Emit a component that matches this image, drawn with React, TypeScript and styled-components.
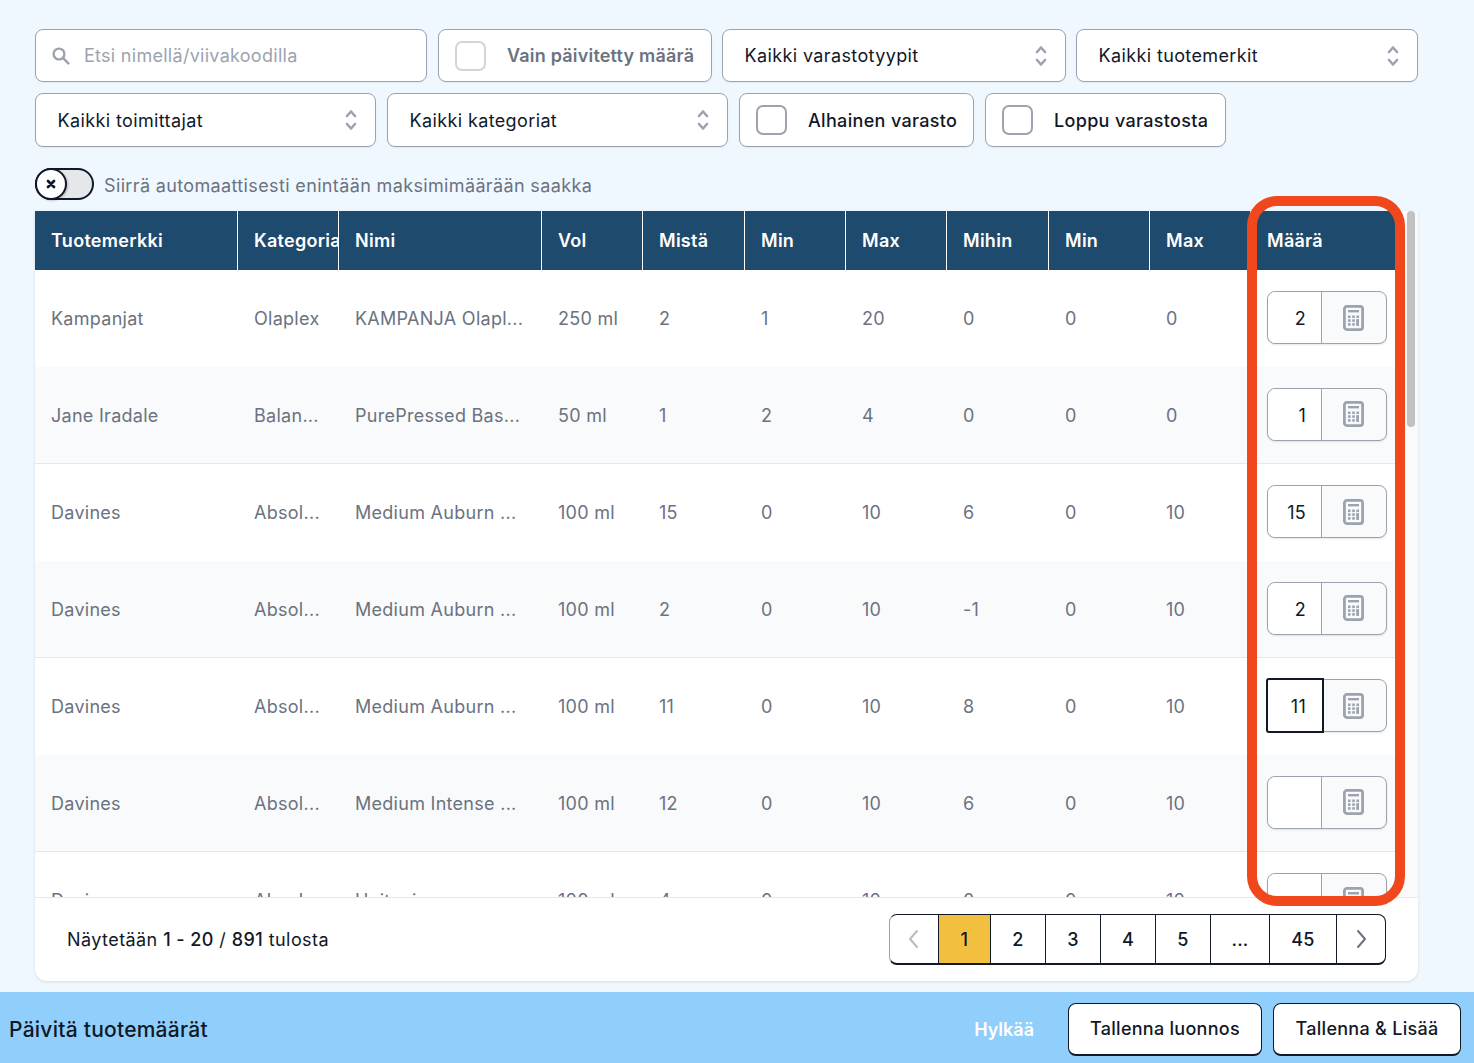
import React from "react";
import styled, { createGlobalStyle } from "styled-components";

const Global = createGlobalStyle`
  html, body { margin: 0; padding: 0; height: 1063px; overflow: hidden; background: #f0f8ff; }
  body, input, button { font-family: Inter, "Noto Sans", sans-serif; font-size: 18px; letter-spacing: 0.28px; color: #111827; }
  * { box-sizing: border-box; }
`;

const Page = styled.div`
  position: relative;
  width: 1474px;
  height: 1063px;
  display: flex;
  flex-direction: column;
`;
const Main = styled.main`
  flex: 1;
  min-height: 0;
  padding: 29px 56px 11px 35px;
  display: flex;
  flex-direction: column;
`;
const FilterRow = styled.div<{ $top?: number; $gap: number }>`
  display: flex;
  gap: ${p => p.$gap}px;
  height: ${p => (p.$top ? 54 : 53)}px;
  margin-top: ${p => p.$top ?? 0}px;
`;
const Control = styled.div<{ $w: number }>`
  width: ${p => p.$w}px;
  height: 100%;
  flex: none;
  display: flex;
  align-items: center;
  background: #fff;
  border: 1px solid #9ca3af;
  border-radius: 8px;
  box-shadow: 0 1px 2px rgba(0, 0, 0, 0.06);
`;
const Search = styled(Control)`
  padding-left: 16px;
  gap: 14px;
  margin-right: 1px;
  color: #9ca3af;
`;
const SelectBox = styled(Control)`
  padding: 0 18px 0 21.5px;
  justify-content: space-between;
  letter-spacing: 0.38px;
`;
const CheckBox = styled(Control)<{ $muted?: boolean }>`
  padding-left: 16px;
  gap: 21px;
  font-weight: ${p => (p.$muted ? 600 : 500)};
  color: ${p => (p.$muted ? "#6b7280" : "#111827")};
  letter-spacing: ${p => (p.$muted ? 0.2 : 0.33)}px;
  white-space: nowrap;
`;
const Tick = styled.span<{ $muted?: boolean }>`
  width: 31px;
  height: 30px;
  flex: none;
  border: 2px solid ${p => (p.$muted ? "#d1d5db" : "#9ca3af")};
  border-radius: 7px;
  background: #fff;
`;
const ToggleRow = styled.div`
  display: flex;
  align-items: center;
  gap: 10px;
  height: 32px;
  margin: 21px 0 11px;
  color: #6b7280;
`;
const ToggleLabel = styled.span`
  margin-top: 2px;
  letter-spacing: 0.36px;
`;
const Toggle = styled.span`
  position: relative;
  width: 59px;
  height: 32px;
  border: 2px solid #111827;
  border-radius: 16px;
  background: #e5e7eb;
`;
const Knob = styled.span`
  position: absolute;
  left: -2px;
  top: -2px;
  width: 32px;
  height: 32px;
  border: 2.5px solid #111827;
  border-radius: 50%;
  background: #fff;
  box-shadow: 1px 1px 2px rgba(0, 0, 0, 0.2);
  display: flex;
  align-items: center;
  justify-content: center;
`;
const Card = styled.section`
  flex: 1;
  min-height: 0;
  background: #fff;
  border-radius: 0 0 12px 12px;
  box-shadow: 0 1px 3px rgba(0, 0, 0, 0.12);
  display: flex;
  flex-direction: column;
  overflow: hidden;
`;
const ScrollArea = styled.div`
  height: 687px;
  flex: none;
  display: flex;
  overflow: hidden;
  border-bottom: 1px solid #e5e7eb;
`;
const TableClip = styled.div`
  width: 1360px;
  flex: none;
  overflow: hidden;
`;
const Track = styled.div`
  width: 23px;
  flex: none;
  background: #fafafa;
  padding-left: 12px;
`;
const Thumb = styled.div`
  width: 8px;
  height: 216px;
  background: #c1c1c1;
  border-radius: 4px;
`;
const Table = styled.table`
  width: 1360px;
  table-layout: fixed;
  border-collapse: separate;
  border-spacing: 0;
`;
const Th = styled.th`
  height: 59px;
  padding: 0 0 0 16px;
  background: #1e4a6d;
  color: #fff;
  font-weight: 600;
  text-align: left;
  white-space: nowrap;
  overflow: hidden;
  border-right: 1px solid #fff;
  &:last-child { border-right: 0; }
`;
const Tr = styled.tr<{ $even: boolean }>`
  background: ${p => (p.$even ? "#f9fafb" : "#fff")};
`;
const Td = styled.td<{ $even: boolean }>`
  height: 97px;
  padding: 0 0 0 16px;
  color: #6b7280;
  white-space: nowrap;
  overflow: hidden;
  border-bottom: ${p => (p.$even ? "1px solid #e5e7eb" : "0")};
`;
const Qty = styled.div`
  width: 120px;
  height: 53px;
  margin-top: -2px;
  display: flex;
  border: 1px solid #9ca3af;
  border-radius: 8px;
  box-shadow: 0 1px 2px rgba(0, 0, 0, 0.1);
  background: #f9fafb;
  position: relative;
`;
const QtyValue = styled.div<{ $focus?: boolean }>`
  width: 54px;
  flex: none;
  background: #fff;
  border-right: 1px solid #9ca3af;
  border-radius: 8px 0 0 8px;
  color: #111827;
  display: flex;
  align-items: center;
  justify-content: flex-end;
  padding: 2px 15px 0 0;
  ${p =>
    p.$focus &&
    `outline: 2px solid #111827; outline-offset: -1px; border-radius: 2px 0 0 2px; border-right: 0; width: 56px; margin: -1px 0 -1px -1px; padding-right: 17px;`}
`;
const QtyIcon = styled.div`
  flex: 1;
  display: flex;
  align-items: center;
  justify-content: center;
  padding-right: 2px;
`;
const Foot = styled.div`
  flex: 1;
  display: flex;
  align-items: flex-start;
  justify-content: space-between;
  padding: 16px 32px 0;
`;
const Summary = styled.div`
  height: 52px;
  line-height: 52px;
  letter-spacing: 0.43px;
  b { font-weight: 500; }
`;
const Pager = styled.nav`
  display: flex;
  height: 51px;
  border: 1px solid #111827;
  border-left-color: #9ca3af;
  border-radius: 8px;
  border-bottom-width: 2px;
  overflow: hidden;
  background: #fff;
`;
const PageCell = styled.span<{ $w: number; $active?: boolean }>`
  width: ${p => p.$w}px;
  flex: none;
  display: flex;
  align-items: center;
  justify-content: center;
  font-weight: 500;
  background: ${p => (p.$active ? "#f3bf3f" : "transparent")};
  border-left: 1px solid #111827;
  &:first-child { border-left: 0; }
`;
const BottomBar = styled.footer`
  height: 71px;
  flex: none;
  background: #90cffb;
  display: flex;
  align-items: center;
  padding: 3px 13px 0 9px;
`;
const Title = styled.h1`
  flex: 1;
  margin: 0;
  font-size: 21px;
  letter-spacing: 0.25px;
  font-weight: 500;
`;
const Dismiss = styled.span`
  color: #fff;
  font-weight: 600;
  margin-right: 34px;
  letter-spacing: 0;
`;
const Action = styled.button<{ $w: number; $gap?: boolean }>`
  width: ${p => p.$w}px;
  height: 53px;
  margin-left: ${p => (p.$gap ? 11 : 0)}px;
  background: #fff;
  border: 1px solid #111827;
  border-bottom-width: 2px;
  border-radius: 8px;
  font-weight: 500;
  padding: 0;
`;
const Highlight = styled.div`
  position: absolute;
  left: 1247px;
  top: 196px;
  width: 158px;
  height: 710px;
  border: 10px solid #f0481c;
  border-radius: 30px;
  pointer-events: none;
`;

const SearchIcon = () => (
  <svg width="18" height="18" viewBox="0 0 18 18" fill="none" stroke="#9ca3af" strokeWidth="2.4" strokeLinecap="round">
    <circle cx="7" cy="7" r="5.4" />
    <path d="M11.2 11.2 16.4 16.4" />
  </svg>
);
const Chevrons = () => (
  <svg width="12" height="22" viewBox="0 0 12 22" fill="none" stroke="#9ca3af" strokeWidth="2.6" strokeLinecap="round" strokeLinejoin="round">
    <path d="M2 7 6 2.5 10 7M2 15l4 4.5 4-4.5" />
  </svg>
);
const Calc = () => (
  <svg width="21" height="26" viewBox="0 0 21 26" fill="none">
    <rect x="1.4" y="1.4" width="18.2" height="23.2" rx="2.5" fill="#f9fafb" stroke="#9ca3af" strokeWidth="2.8" />
    <path d="M5 5h11v2.4H5z" fill="#9ca3af" />
    {[10.5, 14.3, 18.1].flatMap(y =>
      [5, 9.2, 13.4].map(x => <rect key={`${x}-${y}`} x={x} y={y} width="2.6" height="2.6" fill="#9ca3af" />)
    )}
    <rect x="13.4" y="14.3" width="2.6" height="6.4" fill="#9ca3af" />
  </svg>
);
const ChevronSide = ({ d, color }: { d: string; color: string }) => (
  <svg width="14" height="20" viewBox="0 0 14 20" fill="none" stroke={color} strokeWidth="2" strokeLinecap="round" strokeLinejoin="round">
    <path d={d} />
  </svg>
);

const widths = [203, 101, 203, 101, 102, 101, 101, 102, 101, 101, 144];
const heads = ["Tuotemerkki", "Kategoria", "Nimi", "Vol", "Mistä", "Min", "Max", "Mihin", "Min", "Max", "Määrä"];
const rows: { c: string[]; q: string; focus?: boolean }[] = [
  { c: ["Kampanjat", "Olaplex", "KAMPANJA Olapl...", "250 ml", "2", "1", "20", "0", "0", "0"], q: "2" },
  { c: ["Jane Iradale", "Balan...", "PurePressed Bas...", "50 ml", "1", "2", "4", "0", "0", "0"], q: "1" },
  { c: ["Davines", "Absol...", "Medium Auburn ...", "100 ml", "15", "0", "10", "6", "0", "10"], q: "15" },
  { c: ["Davines", "Absol...", "Medium Auburn ...", "100 ml", "2", "0", "10", "-1", "0", "10"], q: "2" },
  { c: ["Davines", "Absol...", "Medium Auburn ...", "100 ml", "11", "0", "10", "8", "0", "10"], q: "11", focus: true },
  { c: ["Davines", "Absol...", "Medium Intense ...", "100 ml", "12", "0", "10", "6", "0", "10"], q: "" },
  { c: ["Davines", "Absol...", "Hoitoaine", "100 ml", "4", "0", "10", "0", "0", "10"], q: "" },
];
const pages = [
  { t: "1", w: 52, active: true },
  { t: "2", w: 55 },
  { t: "3", w: 55 },
  { t: "4", w: 55 },
  { t: "5", w: 55 },
  { t: "...", w: 59 },
  { t: "45", w: 67 },
];

export default function App() {
  return (
    <Page>
      <Global />
      <Main>
        <FilterRow $gap={10}>
          <Search $w={392}>
            <SearchIcon />
            Etsi nimellä/viivakoodilla
          </Search>
          <CheckBox $w={274} $muted>
            <Tick $muted />
            Vain päivitetty määrä
          </CheckBox>
          <SelectBox $w={344}>
            Kaikki varastotyypit
            <Chevrons />
          </SelectBox>
          <SelectBox $w={342}>
            Kaikki tuotemerkit
            <Chevrons />
          </SelectBox>
        </FilterRow>
        <FilterRow $top={11} $gap={11}>
          <SelectBox $w={341}>
            Kaikki toimittajat
            <Chevrons />
          </SelectBox>
          <SelectBox $w={341}>
            Kaikki kategoriat
            <Chevrons />
          </SelectBox>
          <CheckBox $w={235}>
            <Tick />
            Alhainen varasto
          </CheckBox>
          <CheckBox $w={241}>
            <Tick />
            Loppu varastosta
          </CheckBox>
        </FilterRow>
        <ToggleRow>
          <Toggle>
            <Knob>
              <svg width="10" height="10" viewBox="0 0 10 10" stroke="#111827" strokeWidth="2.8" strokeLinecap="round">
                <path d="M2 2l6 6M8 2l-6 6" />
              </svg>
            </Knob>
          </Toggle>
          <ToggleLabel>Siirrä automaattisesti enintään maksimimäärään saakka</ToggleLabel>
        </ToggleRow>
        <Card>
          <ScrollArea>
            <TableClip>
              <Table>
                <colgroup>
                  {widths.map((w, i) => (
                    <col key={i} width={w} />
                  ))}
                </colgroup>
                <thead>
                  <tr>
                    {heads.map((h, i) => (
                      <Th key={i}>{h}</Th>
                    ))}
                  </tr>
                </thead>
                <tbody>
                  {rows.map((r, i) => {
                    const even = i % 2 === 1;
                    return (
                      <Tr key={i} $even={even}>
                        {r.c.map((c, j) => (
                          <Td key={j} $even={even}>
                            {c}
                          </Td>
                        ))}
                        <Td $even={even}>
                          <Qty>
                            <QtyValue $focus={r.focus}>{r.q}</QtyValue>
                            <QtyIcon>
                              <Calc />
                            </QtyIcon>
                          </Qty>
                        </Td>
                      </Tr>
                    );
                  })}
                </tbody>
              </Table>
            </TableClip>
            <Track>
              <Thumb />
            </Track>
          </ScrollArea>
          <Foot>
            <Summary>
              Näytetään <b>1 - 20</b> / <b>891</b> tulosta
            </Summary>
            <Pager>
              <PageCell $w={48}>
                <ChevronSide d="M10 2 3 10l7 8" color="#b6bbc4" />
              </PageCell>
              {pages.map(p => (
                <PageCell key={p.t} $w={p.w} $active={p.active}>
                  {p.t}
                </PageCell>
              ))}
              <PageCell $w={49}>
                <ChevronSide d="M4 2l7 8-7 8" color="#6b7280" />
              </PageCell>
            </Pager>
          </Foot>
        </Card>
      </Main>
      <BottomBar>
        <Title>Päivitä tuotemäärät</Title>
        <Dismiss>Hylkää</Dismiss>
        <Action $w={194}>Tallenna luonnos</Action>
        <Action $w={188} $gap>
          Tallenna &amp; Lisää
        </Action>
      </BottomBar>
      <Highlight />
    </Page>
  );
}
